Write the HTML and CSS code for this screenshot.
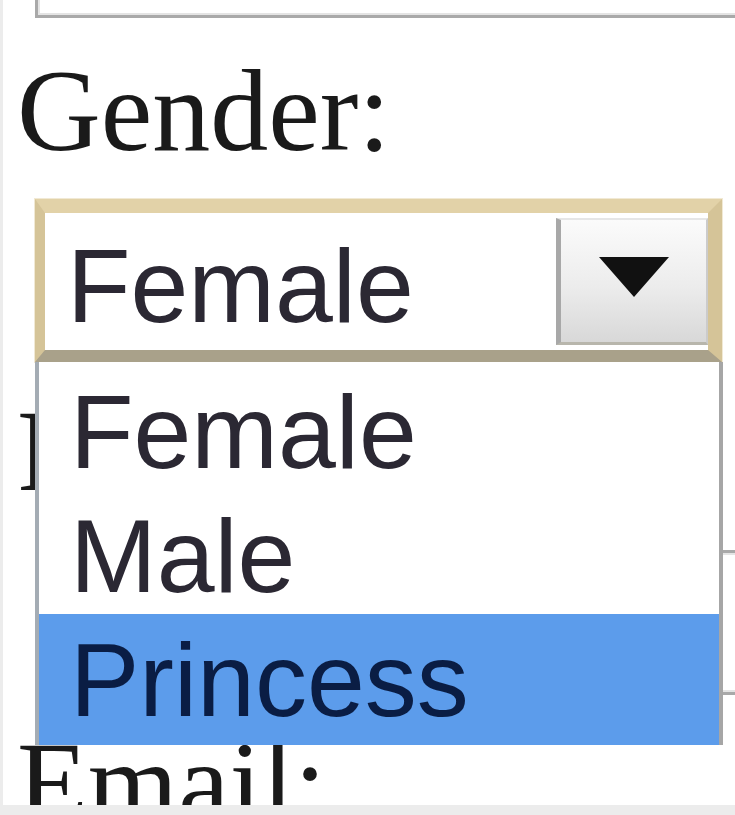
FILE: index.html
```html
<!DOCTYPE html>
<html lang="en">
<head>
  <meta charset="UTF-8" />
  <meta name="viewport" content="width=device-width, initial-scale=1.0"/>
  <title>Sign Up</title>
  <link rel="stylesheet" href="styles.css">
</head>
<body>

<div class="frame">
  <form class="form">
    <div class="text-input"></div>

    <label class="label label-gender">Gender:</label>

    <!-- open dropdown -->
    <div class="select-wrap">
      <div class="select">
        <div class="select-value">Female</div>
        <div class="select-btn">
          <svg width="72" height="42" viewBox="0 0 72 42"><polygon points="1,1 71,1 36,41" fill="#111"/></svg>
        </div>
      </div>
      <ul class="select-list">
        <li>Female</li>
        <li>Male</li>
        <li class="active">Princess</li>
      </ul>
    </div>

    <label class="label label-phone">Phone:</label>
    <div class="text-input text-input-phone"></div>

    <label class="label label-email">Email:</label>
  </form>
</div>

</body>
</html>
```

FILE: styles.css
```css
* {
  margin: 0;
  padding: 0;
  box-sizing: border-box;
}

body {
  background: #ececec;
  overflow: hidden;
}

.frame {
  margin-left: 3px;
  height: 805px;
  background: #ffffff;
  overflow: hidden;
}

.form {
  padding-left: 14px;
  margin-top: -127px;
}

.text-input {
  height: 145px;
  width: 760px;
  margin-left: 18px;
  background: #fff;
  border: 3px solid #a9a9a9;
  box-shadow: inset 0 0 0 2px #e4e4e4;
}

.label {
  display: block;
  font-family: "Liberation Serif", "Times New Roman", serif;
  font-size: 116px;
  line-height: 116px;
  color: #1a1a1a;
}

.label-gender { margin-top: 35px; }
.label-phone { margin-top: 31px; }
.label-email { margin-top: 30px; }

.text-input-phone { margin-top: 41px; }

/* select box */
.select-wrap {
  position: relative;
  margin-top: 30px;
  margin-left: 18px;
  width: 687px;
}

.select {
  display: flex;
  height: 163px;
  background: #fff;
  border-style: solid;
  border-width: 14px 14px 12px 10px;
  border-color: #e2d2a8 #d5c498 #a9a18a #d5c498;
  box-shadow: 0 0 0 1px #f1e9d4;
}

.select-value {
  flex: 1;
  padding: 15px 0 0 22px;
  font-family: "Liberation Sans", Arial, sans-serif;
  font-size: 104px;
  line-height: 116px;
  color: #2b2833;
}

.select-btn {
  width: 152px;
  margin: 5px 0;
  display: flex;
  align-items: center;
  justify-content: center;
  padding-bottom: 8px;
  background: linear-gradient(#fbfbfb, #ececec 55%, #d8d8d8);
  border-left: 5px solid #a8a8a8;
  border-right: 2px solid #cbcbcb;
  border-top: 2px solid #e6e6e6;
  border-bottom: 3px solid #b8b6ac;
}

/* dropdown list */
.select-list {
  position: absolute;
  top: 100%;
  left: 0;
  width: 688px;
  list-style: none;
  background: #fff;
  border-left: 4px solid #a4acb4;
  border-right: 4px solid #a6a6a6;
  padding-top: 4px;
}

.select-list li {
  height: 124px;
  padding: 8px 0 0 31px;
  font-family: "Liberation Sans", Arial, sans-serif;
  font-size: 104px;
  line-height: 116px;
  color: #2b2833;
}

.select-list li.active {
  height: 131px;
  background: #5c9ceb;
  color: #0a1d44;
}
```
